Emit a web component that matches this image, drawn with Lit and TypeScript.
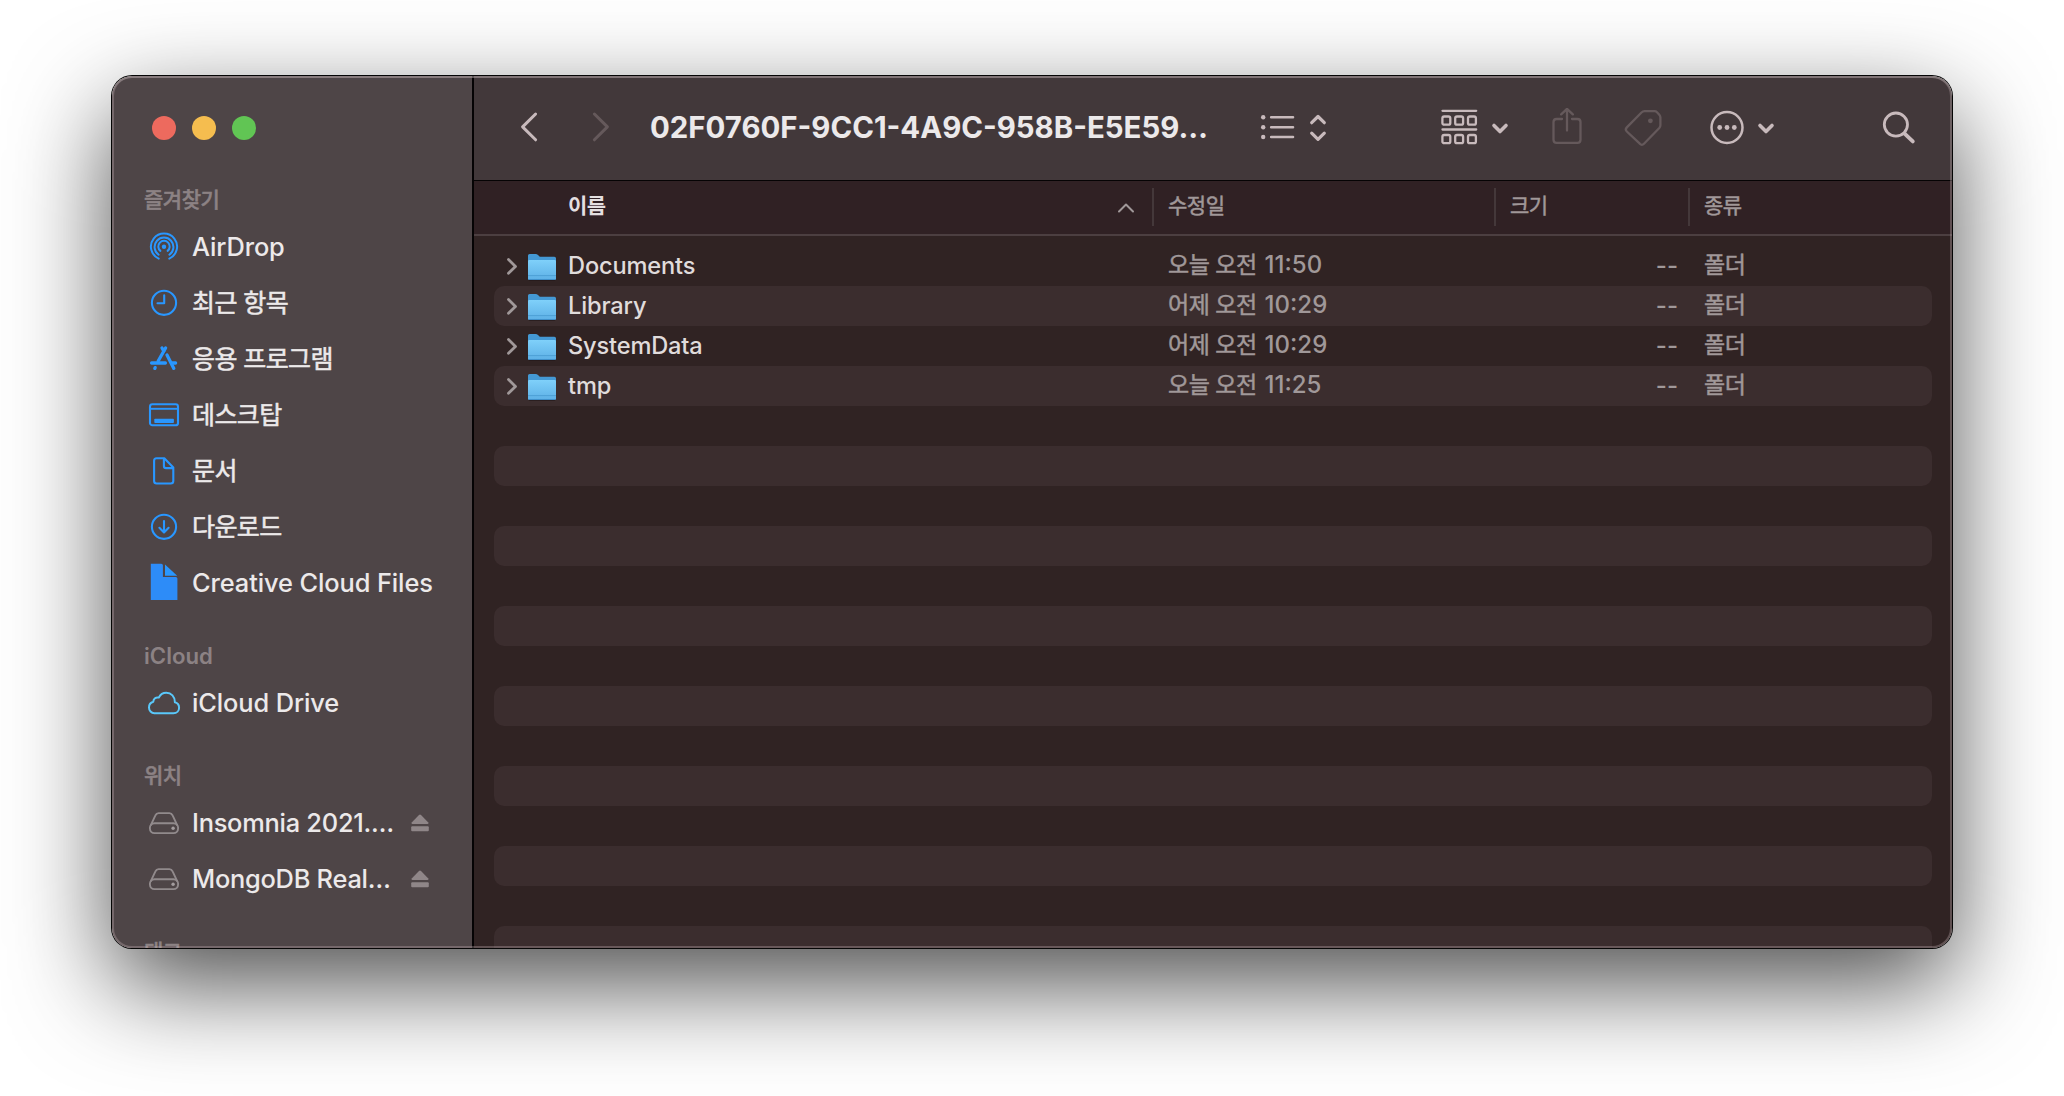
import { html, css, svg, LitElement, nothing } from 'lit';
import type { TemplateResult, SVGTemplateResult } from 'lit';
import { customElement, property } from 'lit/decorators.js';
import { classMap } from 'lit/directives/class-map.js';

interface Place {
    icon: string,
    label: string,
    ejectable?: boolean
}

interface Section {
    title: string,
    places: Place[]
}

interface FileRow {
    name: string,
    day: string,
    time: string,
    size: string,
    kind: string
}

const sections: Section[] = [
    {
        title: "즐겨찾기",
        places: [
            { icon: "airdrop", label: "AirDrop" },
            { icon: "clock", label: "최근 항목" },
            { icon: "apps", label: "응용 프로그램" },
            { icon: "desktop", label: "데스크탑" },
            { icon: "document", label: "문서" },
            { icon: "download", label: "다운로드" },
            { icon: "file", label: "Creative Cloud Files" }
        ]
    },
    {
        title: "iCloud",
        places: [{ icon: "cloud", label: "iCloud Drive" }]
    },
    {
        title: "위치",
        places: [
            { icon: "disk", label: "Insomnia 2021.…", ejectable: true },
            { icon: "disk", label: "MongoDB Real…", ejectable: true }
        ]
    },
    { title: "태그", places: [] }
];

const files: FileRow[] = [
    { name: "Documents", day: "오늘 오전", time: "11:50", size: "--", kind: "폴더" },
    { name: "Library", day: "어제 오전", time: "10:29", size: "--", kind: "폴더" },
    { name: "SystemData", day: "어제 오전", time: "10:29", size: "--", kind: "폴더" },
    { name: "tmp", day: "오늘 오전", time: "11:25", size: "--", kind: "폴더" }
];

// the list view keeps its stripes down to the bottom of the window
const ROW_COUNT = 18;

const isHangul = (text: string) => /[가-힣]/.test(text);

// all sidebar icons share a 36x36 box
const placeIcons: Record<string, SVGTemplateResult> = {
    airdrop: svg`
        <g fill="none" stroke="#2997ff" stroke-width="2" stroke-linecap="round">
            <path d="M12.7 29.600A13.1 13.1 0 1 1 23.3 29.600"/>
            <path d="M12.6 25.700A9.4 9.4 0 1 1 23.4 25.700"/>
            <path d="M14.400 21.900A5.700 5.700 0 1 1 21.600 21.900"/>
        </g>
        <circle cx="18" cy="17.800" r="2.2" fill="#2997ff"/>`,
    clock: svg`
        <g fill="none" stroke="#2997ff" stroke-width="2.1" stroke-linecap="round" stroke-linejoin="round">
            <circle cx="18" cy="17.800" r="12.1"/>
            <path d="M18.2 10.3V18.2H11.5"/>
        </g>`,
    apps: svg`
        <g fill="none" stroke="#2997ff" stroke-width="3.300" stroke-linecap="round">
            <path d="M19.6 7L12.2 20"/>
            <path d="M16 7L17.700 10"/>
            <path d="M21 14L27.8 27.400"/>
            <path d="M5.6 22H19.4M25.8 22H29.6"/>
            <path d="M9.2 26.600L8.800 27.400"/>
        </g>`,
    desktop: svg`
        <rect x="4" y="7.3" width="28" height="21" rx="2.4" fill="none" stroke="#2997ff" stroke-width="2.1"/>
        <path d="M4 11.800H32" stroke="#2997ff" stroke-width="1.9"/>
        <rect x="8.3" y="21.8" width="19.6" height="4.2" rx="0.8" fill="#2997ff"/>`,
    document: svg`
        <g fill="none" stroke="#2997ff" stroke-width="2.1" stroke-linejoin="round">
            <path d="M10.600 5.2H18.3L27.3 14.500V28Q27.3 30.500 24.8 30.500H10.6Q8.1 30.500 8.1 28V7.700Q8.1 5.2 10.600 5.2Z"/>
            <path d="M17.9 5.500V12.900Q17.9 15.1 20 15.1H27"/>
        </g>`,
    download: svg`
        <g fill="none" stroke="#2997ff" stroke-width="2.1" stroke-linecap="round" stroke-linejoin="round">
            <circle cx="18" cy="17.800" r="12.1"/>
            <path d="M18 12V23M13.4 18.800L18 23.400L22.6 18.800"/>
        </g>`,
    file: svg`
        <path d="M4.8 -1.300H15.3Q16.9 -1.300 16.9 .3V12H29.8Q31.4 12 31.4 13.600V35H4.8Z" fill="#2d8cf8"/>
        <path d="M19 -.5L31.2 10.700H19Z" fill="#2997ff"/>`,
    cloud: svg`
        <path d="M8.3 28.2H27.4C31 28.2 33.1 25.5 33.1 22.7C33.1 19.8 31.2 17.8 28.9 17.2C28.9 11.5 25.2 7.8 20.3 7.8C16.7 7.8 14.1 9.9 12.8 12.6C9.9 11.8 7.4 13.9 7.3 16.7C4.7 17.4 3 19.6 3 22.4C3 25.7 5.4 28.2 8.3 28.2Z"
            fill="none" stroke="#5ac8fa" stroke-width="2" stroke-linejoin="round"/>`,
    disk: svg`
        <g fill="none" stroke="#918a8c" stroke-width="1.9" stroke-linejoin="round">
            <rect x="3.9" y="18.2" width="28.2" height="9.9" rx="4.6"/>
            <path d="M4.6 20.6L9.4 10.4Q10.4 8.1 12.6 8.1H23.4Q25.6 8.1 26.6 10.4L31.4 20.6"/>
        </g>
        <circle cx="27.1" cy="23.3" r="1.7" fill="#a39c9e"/>`
};

@customElement('finder-sidebar')
export class FinderSidebar extends LitElement {
    static get styles() {
        return [
            css`
            :host {
                display: flex;
                flex-direction: column;
                width: 360px;
                flex: none;
                overflow: hidden;
                background-color: #4e4547;
                border-right: 2px solid #050304;
            }
            .lights {
                display: flex;
                gap: 16px;
                padding: 40px 0 15px 40px;
                flex: none;
            }
            .light {
                width: 24px;
                height: 24px;
                border-radius: 50%;
            }
            .close { background-color: #ed6a5e; }
            .minimize { background-color: #f5bd4f; }
            .zoom { background-color: #61c554; }
            .title {
                box-sizing: border-box;
                height: 64px;
                flex: none;
                padding: 30px 0 0 32px;
                line-height: 30px;
                font-size: 22.2px;
                font-weight: 600;
                color: #8c8284;
            }
            .title.hangul {
                font-size: 21px;
                font-weight: 500;
                letter-spacing: -0.5px;
                -webkit-text-stroke: 0.5px;
            }
            .place {
                display: flex;
                align-items: center;
                height: 56px;
                flex: none;
                padding: 0 43px 0 34px;
                color: #ece9ea;
            }
            .icon {
                width: 36px;
                height: 36px;
                flex: none;
                margin-right: 10px;
                overflow: visible;
            }
            .label {
                flex: 1;
                padding-bottom: 2px;
                white-space: nowrap;
                font-size: 25.4px;
                font-weight: 500;
                letter-spacing: -0.1px;
            }
            .label.hangul {
                padding-bottom: 4px;
                font-size: 25px;
                font-weight: 400;
                letter-spacing: -0.6px;
                -webkit-text-stroke: 0.5px;
            }
            .label.ejectable {
                letter-spacing: -0.25px;
            }
            .eject {
                width: 18px;
                height: 18px;
                fill: #8f8688;
            }
            `
        ]
    }

    @property({ type: Array }) sections: Section[] = [];

    renderPlace(place: Place): TemplateResult {
        const classes = { label: true, hangul: isHangul(place.label), ejectable: !!place.ejectable };
        return html`
            <div class="place">
                <svg class="icon" viewBox="0 0 36 36">${placeIcons[place.icon]}</svg>
                <span class=${classMap(classes)}>${place.label}</span>
                ${place.ejectable ? html`
                    <svg class="eject" viewBox="0 0 18 18">
                        <path d="M9 .4Q9.500 .4 10 .9L17.300 8.600Q18 10 16.600 10H1.400Q0 10 .7 8.600L8 .9Q8.500 .4 9 .4Z"/>
                        <rect x="0.200" y="12.300" width="17.600" height="5" rx="1"/>
                    </svg>` : nothing}
            </div>
        `
    }

    render() {
        return html`
            <div class="lights">
                <span class="light close"></span>
                <span class="light minimize"></span>
                <span class="light zoom"></span>
            </div>
            ${this.sections.map(section => html`
                <div class=${classMap({ title: true, hangul: isHangul(section.title) })}>${section.title}</div>
                ${section.places.map(place => this.renderPlace(place))}
            `)}
        `
    }
}

@customElement('finder-toolbar')
export class FinderToolbar extends LitElement {
    static get styles() {
        return [
            css`
            :host {
                box-sizing: border-box;
                display: flex;
                align-items: center;
                height: 105px;
                flex: none;
                padding: 0 32px 0 41px;
                background-color: #42383a;
                border-bottom: 1px solid #050304;
                color: #c8babc;
            }
            svg {
                display: block;
                flex: none;
                fill: none;
                stroke: currentColor;
                stroke-linecap: round;
                stroke-linejoin: round;
            }
            .dim {
                color: #65595b;
            }
            .nav {
                display: flex;
                gap: 44px;
            }
            .heading {
                width: 600px;
                margin-left: 35px;
                padding-bottom: 2px;
                font-size: 29.4px;
                font-weight: 700;
                white-space: nowrap;
                color: #ece9ea;
            }
            .view {
                display: flex;
                gap: 13px;
                margin-left: 9px;
            }
            .group {
                display: flex;
                gap: 12px;
                margin-left: 112px;
            }
            .share {
                margin-left: 41px;
            }
            .tag {
                margin-left: 40px;
            }
            .more {
                display: flex;
                gap: 11px;
                margin-left: 46px;
            }
            .search {
                margin-left: auto;
            }
            `
        ]
    }

    @property() heading = "";

    renderArrow() {
        return html`
            <svg width="20" height="40" viewBox="0 0 20 40" stroke-width="3.6">
                <path d="M4 17.500L10 23.500L16 17.500"/>
            </svg>
        `
    }

    render() {
        return html`
            <div class="nav">
                <svg width="28" height="40" viewBox="0 0 28 40" stroke-width="3">
                    <path d="M20.600 6L7.600 18.900L20.600 31.800"/>
                </svg>
                <svg class="dim" width="28" height="40" viewBox="0 0 28 40" stroke-width="3">
                    <path d="M7.400 6L20.400 18.900L7.400 31.800"/>
                </svg>
            </div>
            <div class="heading">${this.heading}</div>
            <div class="view">
                <svg width="36" height="40" viewBox="0 0 36 40" stroke-width="2.600">
                    <path d="M12.200 9.300H34M12.200 19.200H34M12.200 29H34"/>
                    <g fill="currentColor" stroke="none">
                        <circle cx="4.200" cy="9.300" r="2.200"/>
                        <circle cx="4.200" cy="19.200" r="2.200"/>
                        <circle cx="4.200" cy="29" r="2.200"/>
                    </g>
                </svg>
                <svg width="20" height="40" viewBox="0 0 20 40" stroke-width="3.200">
                    <path d="M3.700 14.700L10 8.500L16.300 14.700M3.700 25.100L10 31.300L16.300 25.100"/>
                </svg>
            </div>
            <div class="group">
                <svg width="38" height="40" viewBox="0 0 38 40" stroke-width="2.300">
                    <path d="M2.500 2.800H36.200M2.500 21.500H36.200"/>
                    <rect x="2.400" y="8.500" width="7.900" height="8.200" rx="1.800"/>
                    <rect x="15.200" y="8.500" width="7.900" height="8.200" rx="1.800"/>
                    <rect x="28" y="8.500" width="7.900" height="8.200" rx="1.800"/>
                    <rect x="2.400" y="27" width="7.900" height="8.200" rx="1.800"/>
                    <rect x="15.200" y="27" width="7.900" height="8.200" rx="1.800"/>
                    <rect x="28" y="27" width="7.900" height="8.200" rx="1.800"/>
                </svg>
                ${this.renderArrow()}
            </div>
            <svg class="share dim" width="32" height="40" viewBox="0 0 32 40" stroke-width="2.300">
                <path d="M11 11H5.600Q2.500 11 2.500 14.100V31.800Q2.500 34.900 5.600 34.900H26.400Q29.500 34.900 29.500 31.800V14.100Q29.500 11 26.400 11H21"/>
                <path d="M16 22.500V1M10.200 6.400L16 .8L21.800 6.400"/>
            </svg>
            <svg class="tag dim" width="40" height="40" viewBox="0 0 40 40" stroke-width="2.300">
                <path d="M21.500 3.200H31.600Q33 3.200 34 4.200L36.300 6.700Q37.400 8 37.400 9.600V17.300Q37.400 18.800 36.300 20L21 35.700Q18.900 37.900 16.800 35.700L3.800 23.500Q1.800 21.500 3.800 19.400L18.500 4.500Q19.800 3.200 21.500 3.200Z"/>
                <circle cx="27.400" cy="12.800" r="2.400" fill="currentColor" stroke="none"/>
            </svg>
            <div class="more">
                <svg width="36" height="40" viewBox="0 0 36 40" stroke-width="2.500">
                    <circle cx="18" cy="19.500" r="15.500"/>
                    <g fill="currentColor" stroke="none">
                        <circle cx="10.700" cy="19.500" r="2.400"/>
                        <circle cx="18" cy="19.500" r="2.400"/>
                        <circle cx="25.300" cy="19.500" r="2.400"/>
                    </g>
                </svg>
                ${this.renderArrow()}
            </div>
            <svg class="search" width="40" height="40" viewBox="0 0 40 40" stroke-width="2.800">
                <circle cx="15.900" cy="16.600" r="11.600"/>
                <path d="M24.600 25.600L32.800 33.400" stroke-width="3.800"/>
            </svg>
        `
    }
}

@customElement('finder-list')
export class FinderList extends LitElement {
    static get styles() {
        return [
            css`
            :host {
                display: flex;
                flex-direction: column;
                flex: 1;
                min-height: 0;
                overflow: hidden;
                background-color: #302323;
                color: #a09899;
            }
            .head {
                box-sizing: border-box;
                display: grid;
                grid-template-columns: 678px 342px 194px 1fr;
                height: 55px;
                flex: none;
                padding-top: 7px;
                background-color: #302124;
                border-bottom: 2px solid #4c3f41;
                font-size: 21px;
                letter-spacing: -0.5px;
                -webkit-text-stroke: 0.5px;
            }
            .column {
                box-sizing: border-box;
                height: 38px;
                padding-left: 14px;
                border-left: 2px solid #44383a;
                line-height: 36px;
            }
            .column.sorted {
                display: flex;
                justify-content: space-between;
                align-items: center;
                border-left: none;
                padding: 0 17px 0 94px;
                line-height: 36px;
                font-weight: 600;
                color: #e4dfe0;
                -webkit-text-stroke: 0;
            }
            .sorted span {
                padding-bottom: 2px;
            }
            .sort {
                width: 18px;
                height: 12px;
                margin-top: 2px;
                fill: none;
                stroke: #a09899;
                stroke-width: 2;
                stroke-linecap: round;
                stroke-linejoin: round;
            }
            .rows {
                padding: 10px 20px 0;
            }
            .row {
                display: grid;
                grid-template-columns: 658px 342px 184px 1fr;
                align-items: center;
                height: 40px;
                border-radius: 10px;
                font-size: 23px;
                line-height: 38px;
                white-space: nowrap;
            }
            .row:nth-child(even) {
                background-color: #3b2d2e;
            }
            .name {
                display: flex;
                align-items: center;
                padding-left: 11px;
                font-size: 23.6px;
                font-weight: 500;
                letter-spacing: -0.15px;
                color: #e0dcdc;
            }
            .name span {
                padding-bottom: 2px;
            }
            .disclosure {
                width: 14px;
                height: 20px;
                fill: none;
                stroke: #a09899;
                stroke-width: 2.8;
                stroke-linecap: round;
                stroke-linejoin: round;
            }
            .folder {
                width: 32px;
                height: 32px;
                margin: 0 10px 0 7px;
            }
            .date {
                display: flex;
                align-items: baseline;
                gap: 8px;
                padding: 0 0 3px 16px;
            }
            .day,
            .kind {
                letter-spacing: -0.5px;
                -webkit-text-stroke: 0.5px;
            }
            .time {
                font-size: 24px;
                font-weight: 500;
            }
            .size {
                padding-bottom: 2px;
                text-align: right;
                font-size: 24px;
                font-weight: 500;
            }
            .kind {
                padding: 0 0 3px 26px;
            }
            `
        ]
    }

    @property({ type: Array }) files: FileRow[] = [];

    renderFile(file: FileRow) {
        return html`
            <div class="name">
                <svg class="disclosure" viewBox="0 0 14 20"><path d="M3.500 2.500L10.500 9.400L3.500 16.300"/></svg>
                <svg class="folder" viewBox="0 0 32 32">
                    <defs>
                        <linearGradient id="front" x1="0" y1="0" x2="0" y2="1">
                            <stop offset="0" stop-color="#7fd0fa"/>
                            <stop offset="1" stop-color="#5db0e6"/>
                        </linearGradient>
                    </defs>
                    <rect x="2.500" y="27" width="27" height="3" rx="1.500" fill="#221617" opacity="0.600"/>
                    <path d="M2 4.600Q2 3 3.600 3H9.600Q11 3 12 4L13.800 5.700H28.400Q30 5.700 30 7.300V15H2Z" fill="#4499d4"/>
                    <path d="M2 10.200Q2 9 3.200 9H28.800Q30 9 30 10.200V27.400Q30 29 28.400 29H3.600Q2 29 2 27.400Z" fill="url(#front)"/>
                    <path d="M2 24.600H30" stroke="#4b9dd4" stroke-width="0.900"/>
                    <path d="M2.600 28.500H29.400" stroke="#3f8fc9" stroke-width="1"/>
                </svg>
                <span>${file.name}</span>
            </div>
            <div class="date"><span class="day">${file.day}</span><span class="time">${file.time}</span></div>
            <div class="size">${file.size}</div>
            <div class="kind">${file.kind}</div>
        `
    }

    render() {
        return html`
            <div class="head">
                <div class="column sorted">
                    <span>이름</span>
                    <svg class="sort" viewBox="0 0 18 12"><path d="M2 9.500L9 2.500L16 9.500"/></svg>
                </div>
                <div class="column">수정일</div>
                <div class="column">크기</div>
                <div class="column">종류</div>
            </div>
            <div class="rows">
                ${Array.from({ length: ROW_COUNT }, (_, i) => html`
                    <div class="row">${this.files[i] ? this.renderFile(this.files[i]) : nothing}</div>
                `)}
            </div>
        `
    }
}

@customElement('app-root')
export class AppRoot extends LitElement {
    static get styles() {
        return [
            css`
            :host {
                box-sizing: border-box;
                display: block;
                height: 1096px;
                padding: 76px 112px 148px;
                overflow: hidden;
                background-color: #fff;
                font-family: Inter, "Noto Sans CJK KR", sans-serif;
            }
            .window {
                position: relative;
                display: flex;
                height: 872px;
                border-radius: 20px;
                box-shadow: 0 0 0 1px #050505, 0 36px 100px rgba(0, 0, 0, 0.7);
            }
            .content {
                display: flex;
                flex: 1;
                border-radius: 20px;
                overflow: hidden;
            }
            .main {
                display: flex;
                flex-direction: column;
                flex: 1;
                min-width: 0;
            }
            /* light rim drawn over the panes */
            .rim {
                position: absolute;
                inset: 0;
                border-radius: 20px;
                box-shadow: inset 0 0 0 2px rgba(200, 180, 185, 0.32), inset 0 2px 0 rgba(255, 255, 255, 0.16);
                pointer-events: none;
            }
            `
        ]
    }

    render() {
        return html`
            <div class="window">
                <div class="content">
                    <finder-sidebar .sections=${sections}></finder-sidebar>
                    <div class="main">
                        <finder-toolbar heading="02F0760F-9CC1-4A9C-958B-E5E59…"></finder-toolbar>
                        <finder-list .files=${files}></finder-list>
                    </div>
                </div>
                <div class="rim"></div>
            </div>
        `
    }
}
